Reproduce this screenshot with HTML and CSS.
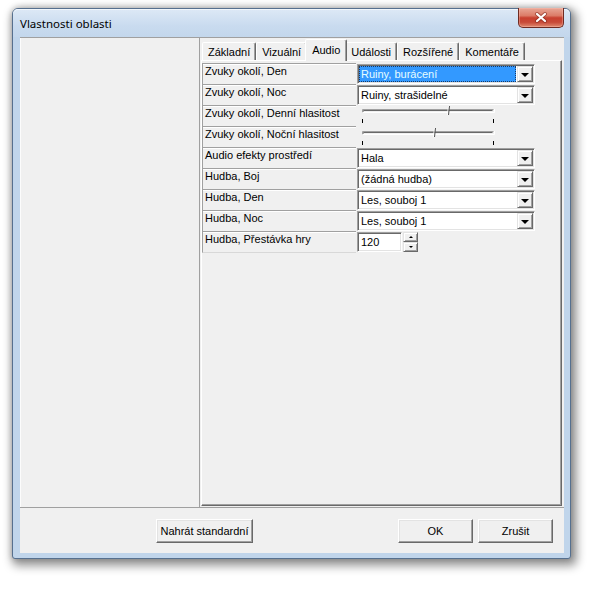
FILE: index.html
```html
<!DOCTYPE html>
<html>
<head>
<meta charset="utf-8">
<title>Vlastnosti oblasti</title>
<link rel="stylesheet" href="styles.css">
</head>
<body>
<div class="window">
  <div class="titlebar">
    <span class="title">Vlastnosti oblasti</span>
    <div class="close">
      <svg width="14" height="11" viewBox="0 0 14 11">
        <path d="M3 2 L11 9 M11 2 L3 9" stroke="#7a2418" stroke-width="4" stroke-linecap="round" opacity="0.55"/>
        <path d="M3 2 L11 9 M11 2 L3 9" stroke="#ffffff" stroke-width="2.2" stroke-linecap="round"/>
      </svg>
    </div>
  </div>
  <div class="client">
    <div class="main">
      <div class="left"></div>
      <div class="right">
        <div class="tabs">
          <div class="tab">Základní</div>
          <div class="tab">Vizuální</div>
          <div class="tab active">Audio</div>
          <div class="tab">Události</div>
          <div class="tab">Rozšířené</div>
          <div class="tab">Komentáře</div>
        </div>
        <div class="pane">
          <div class="grid">
            <div class="label">Zvuky okolí, Den</div>
            <div class="value">
              <div class="combo"><span class="text"><span class="sel">Ruiny, burácení</span></span><span class="drop"><i></i></span></div>
            </div>

            <div class="label">Zvuky okolí, Noc</div>
            <div class="value">
              <div class="combo"><span class="text">Ruiny, strašidelné</span><span class="drop"><i></i></span></div>
            </div>

            <div class="label">Zvuky okolí, Denní hlasitost</div>
            <div class="value">
              <svg class="slider" width="178" height="21" viewBox="0 0 178 21">
                <path d="M6.5 7.5 V4.5 H137.5" stroke="#a0a0a0" fill="none"/>
                <path d="M7.5 6.5 V5.5 H136.5" stroke="#696969" fill="none"/>
                <path d="M6.5 7.5 H138.5 V4" stroke="#ffffff" fill="none"/>
                <path d="M92.5 1 L91.5 10" stroke="#ffffff" stroke-width="1"/>
                <path d="M93.5 1 L92.5 10" stroke="#505050" stroke-width="1"/>
                <path d="M6.5 14 V18 M137.5 14 V18" stroke="#000" stroke-width="1"/>
              </svg>
            </div>

            <div class="label">Zvuky okolí, Noční hlasitost</div>
            <div class="value">
              <svg class="slider" width="178" height="21" viewBox="0 0 178 21">
                <path d="M6.5 8.5 V5.5 H137.5" stroke="#a0a0a0" fill="none"/>
                <path d="M7.5 7.5 V6.5 H136.5" stroke="#696969" fill="none"/>
                <path d="M6.5 8.5 H138.5 V5" stroke="#ffffff" fill="none"/>
                <path d="M78.5 2 L77.5 11" stroke="#ffffff" stroke-width="1"/>
                <path d="M79.5 2 L78.5 11" stroke="#505050" stroke-width="1"/>
                <path d="M6.5 15 V19 M137.5 15 V19" stroke="#000" stroke-width="1"/>
              </svg>
            </div>

            <div class="label">Audio efekty prostředí</div>
            <div class="value">
              <div class="combo"><span class="text">Hala</span><span class="drop"><i></i></span></div>
            </div>

            <div class="label">Hudba, Boj</div>
            <div class="value">
              <div class="combo"><span class="text">(žádná hudba)</span><span class="drop"><i></i></span></div>
            </div>

            <div class="label">Hudba, Den</div>
            <div class="value">
              <div class="combo"><span class="text">Les, souboj 1</span><span class="drop"><i></i></span></div>
            </div>

            <div class="label">Hudba, Noc</div>
            <div class="value">
              <div class="combo"><span class="text">Les, souboj 1</span><span class="drop"><i></i></span></div>
            </div>

            <div class="label last">Hudba, Přestávka hry</div>
            <div class="value spinrow">
              <div class="edit">120</div>
              <div class="spin">
                <span class="spinbtn"><i class="up"></i></span>
                <span class="spinbtn"><i class="down"></i></span>
              </div>
            </div>
          </div>
        </div>
      </div>
    </div>
    <div class="buttons">
      <div class="button wide">Nahrát standardní</div>
      <div class="grow"></div>
      <div class="button">OK</div>
      <div class="button">Zrušit</div>
    </div>
  </div>
</div>
</body>
</html>
```

FILE: styles.css
```css
html, body {
  margin: 0;
  padding: 0;
}

body {
  width: 594px;
  height: 589px;
  overflow: hidden;
  background: #ffffff;
  font-family: "Liberation Sans", Arial, sans-serif;
  font-size: 11px;
  color: #000;
}

.window {
  box-sizing: border-box;
  width: 559px;
  height: 551px;
  margin: 8px 0 0 12px;
  border: 1px solid #56708f;
  border-radius: 6px 6px 3px 3px;
  background: #c0d5eb;
  padding: 0 6px 5px 7px;
  position: relative;
  display: flex;
  flex-direction: column;
  box-shadow: 3px 4px 10px 3px rgba(0, 0, 0, 0.4), 0 0 6px rgba(0, 0, 0, 0.2);
}

.titlebar {
  flex: none;
  height: 28px;
  margin: 0 -6px 0 -7px;
  padding-left: 7px;
  display: flex;
  align-items: center;
  border-radius: 5px 5px 0 0;
  background: linear-gradient(#dde9f6, #c9dbef 60%, #c3d7ec);
  box-shadow: inset 0 1px rgba(255, 255, 255, 0.6);
}

.title {
  font-family: "Noto Sans", "Open Sans", sans-serif;
  font-size: 11.5px;
  color: #000;
  margin-top: 1px;
}

.close {
  position: absolute;
  top: -1px;
  right: 6px;
  width: 46px;
  height: 20px;
  box-sizing: border-box;
  border: 1px solid #6f2b22;
  border-top: none;
  border-radius: 0 0 5px 5px;
  background: linear-gradient(#e8a796 0%, #dc7c68 40%, #c8402f 52%, #c84a38 75%, #e08a70 100%);
  box-shadow: inset 0 0 0 1px rgba(255, 200, 190, 0.35);
  display: flex;
  align-items: center;
  justify-content: center;
}

.client {
  flex: 1;
  display: flex;
  flex-direction: column;
  background: #f0f0f0;
}

.main {
  flex: none;
  height: 471px;
  box-sizing: border-box;
  border-top: 1px solid #a0a0a0;
  border-bottom: 1px solid #a0a0a0;
  display: flex;
}

.left {
  flex: none;
  width: 180px;
  box-sizing: border-box;
  border-right: 1px solid #a0a0a0;
  border-left: 1px solid #fcfcfc;
}

.right {
  flex: 1;
  display: flex;
  flex-direction: column;
  padding: 1px 2px 1px 1px;
}

.tabs {
  flex: none;
  height: 21px;
  display: flex;
  align-items: flex-end;
  padding-left: 1px;
}

.tab {
  box-sizing: border-box;
  height: 18px;
  padding: 3px 5px 0 5px;
  line-height: 13px;
  white-space: nowrap;
  border: 1px solid;
  border-bottom: none;
  border-color: #ffffff #696969 transparent #ffffff;
  border-radius: 2px 2px 0 0;
  box-shadow: inset -1px 0 #a0a0a0;
  background: #f0f0f0;
}

.tab.active {
  height: 22px;
  margin: 0 -2px -1px -2px;
  padding: 4px 6px 0 6px;
  position: relative;
  z-index: 1;
}

.pane {
  flex: 1;
  border: 1px solid;
  border-color: #ffffff #696969 #696969 #ffffff;
  box-shadow: inset -1px -1px #a0a0a0;
  padding-top: 2px;
}

.grid {
  display: grid;
  grid-template-columns: 154px 180px;
  grid-auto-rows: 21px;
}

.label {
  box-sizing: border-box;
  border-top: 1px solid #a0a0a0;
  border-left: 1px solid #a0a0a0;
  padding: 1px 0 0 2px;
  line-height: 13px;
  white-space: nowrap;
  box-shadow: inset 0 1px #ffffff;
}

.label.last {
  border-bottom: 1px solid #d8d8d8;
  height: 22px;
}

.value {
  position: relative;
}

.combo {
  box-sizing: border-box;
  width: 178px;
  height: 20px;
  margin: 1px 0 0 1px;
  border: 1px solid;
  border-color: #a0a0a0 #ffffff #ffffff #a0a0a0;
  box-shadow: inset 1px 1px #696969, inset -1px -1px #e3e3e3;
  background: #ffffff;
  padding: 1px;
  display: flex;
}

.combo .text {
  flex: 1;
  line-height: 16px;
  padding-left: 2px;
  white-space: nowrap;
  overflow: hidden;
}

.combo .sel {
  display: block;
  margin: 0 1px 0 -2px;
  padding-left: 2px;
  background: #3399ff;
  color: #e6fdff;
  outline: 1px dotted #1a3a66;
  outline-offset: -1px;
  height: 16px;
}

.drop {
  flex: none;
  box-sizing: border-box;
  width: 16px;
  height: 16px;
  border: 1px solid;
  border-color: #e3e3e3 #696969 #696969 #e3e3e3;
  box-shadow: inset 1px 1px #ffffff, inset -1px -1px #a0a0a0;
  background: #f0f0f0;
  display: flex;
  align-items: center;
  justify-content: center;
}

.drop i {
  display: block;
  width: 0;
  height: 0;
  border-left: 4px solid transparent;
  border-right: 4px solid transparent;
  border-top: 4px solid #000;
  margin-top: 1px;
}

.slider {
  display: block;
}

.spinrow {
  display: flex;
  align-items: flex-start;
}

.edit {
  box-sizing: border-box;
  width: 45px;
  height: 20px;
  margin: 1px 0 0 1px;
  border: 1px solid;
  border-color: #a0a0a0 #ffffff #ffffff #a0a0a0;
  box-shadow: inset 1px 1px #696969, inset -1px -1px #e3e3e3;
  background: #ffffff;
  padding: 2px 0 0 3px;
  line-height: 15px;
}

.spin {
  margin: 1px 0 0 1px;
  width: 15px;
  height: 20px;
  display: flex;
  flex-direction: column;
}

.spinbtn {
  box-sizing: border-box;
  height: 10px;
  border: 1px solid;
  border-color: #e3e3e3 #696969 #696969 #e3e3e3;
  box-shadow: inset 1px 1px #ffffff, inset -1px -1px #a0a0a0;
  background: #f0f0f0;
  display: flex;
  align-items: center;
  justify-content: center;
}

.spinbtn i {
  display: block;
  width: 0;
  height: 0;
  border-left: 2px solid transparent;
  border-right: 2px solid transparent;
}

.spinbtn i.up {
  border-bottom: 2px solid #000;
}

.spinbtn i.down {
  border-top: 2px solid #000;
}

.buttons {
  flex: 1;
  display: flex;
  align-items: flex-start;
  gap: 5px;
  padding: 11px 11px 0 136px;
}

.grow {
  flex: 1;
}

.button {
  box-sizing: border-box;
  width: 75px;
  height: 24px;
  border: 1px solid;
  border-color: #ffffff #696969 #696969 #ffffff;
  box-shadow: inset -1px -1px #a0a0a0, inset 1px 1px #e3e3e3;
  background: #f0f0f0;
  display: flex;
  align-items: center;
  justify-content: center;
  white-space: nowrap;
}

.button.wide {
  width: 97px;
}
```
